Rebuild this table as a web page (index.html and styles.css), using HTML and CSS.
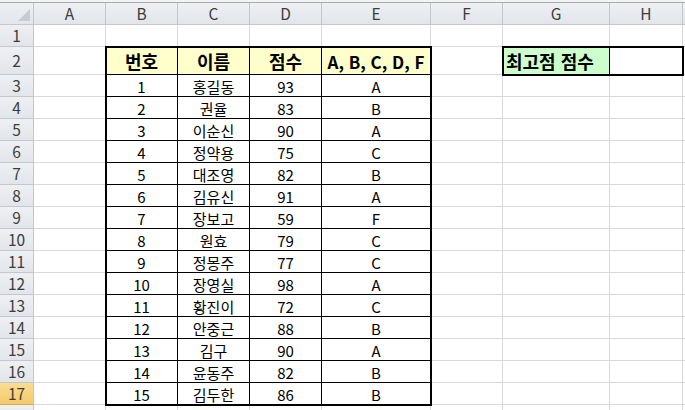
FILE: index.html
```html
<!DOCTYPE html>
<html lang="ko">
<head>
<meta charset="utf-8">
<link rel="stylesheet" href="styles.css">
</head>
<body>
<div class="top"></div>
<div class="stack">
<div class="sheet">
  <div class="h corner"><span class="tri"></span></div>
  <div class="h">A</div><div class="h">B</div><div class="h">C</div><div class="h">D</div><div class="h">E</div><div class="h">F</div><div class="h">G</div><div class="h">H</div><div class="h end"></div>

  <div class="h rh">1</div><div class="c"></div><div class="c"></div><div class="c"></div><div class="c"></div><div class="c"></div><div class="c"></div><div class="c"></div><div class="c"></div><div class="c end"></div>

  <div class="h rh">2</div><div class="c"></div>
  <div class="c t th">번호</div><div class="c t th">이름</div><div class="c t th">점수</div><div class="c t th th-latin">A, B, C, D, F</div>
  <div class="c"></div><div class="c t tg">최고점 점수</div><div class="c"></div><div class="c end"></div>

  <div class="h rh">3</div><div class="c"></div><div class="c t">1</div><div class="c t">홍길동</div><div class="c t">93</div><div class="c t">A</div><div class="c"></div><div class="c"></div><div class="c"></div><div class="c end"></div>
  <div class="h rh">4</div><div class="c"></div><div class="c t">2</div><div class="c t">권율</div><div class="c t">83</div><div class="c t">B</div><div class="c"></div><div class="c"></div><div class="c"></div><div class="c end"></div>
  <div class="h rh">5</div><div class="c"></div><div class="c t">3</div><div class="c t">이순신</div><div class="c t">90</div><div class="c t">A</div><div class="c"></div><div class="c"></div><div class="c"></div><div class="c end"></div>
  <div class="h rh">6</div><div class="c"></div><div class="c t">4</div><div class="c t">정약용</div><div class="c t">75</div><div class="c t">C</div><div class="c"></div><div class="c"></div><div class="c"></div><div class="c end"></div>
  <div class="h rh">7</div><div class="c"></div><div class="c t">5</div><div class="c t">대조영</div><div class="c t">82</div><div class="c t">B</div><div class="c"></div><div class="c"></div><div class="c"></div><div class="c end"></div>
  <div class="h rh">8</div><div class="c"></div><div class="c t">6</div><div class="c t">김유신</div><div class="c t">91</div><div class="c t">A</div><div class="c"></div><div class="c"></div><div class="c"></div><div class="c end"></div>
  <div class="h rh">9</div><div class="c"></div><div class="c t">7</div><div class="c t">장보고</div><div class="c t">59</div><div class="c t">F</div><div class="c"></div><div class="c"></div><div class="c"></div><div class="c end"></div>
  <div class="h rh">10</div><div class="c"></div><div class="c t">8</div><div class="c t">원효</div><div class="c t">79</div><div class="c t">C</div><div class="c"></div><div class="c"></div><div class="c"></div><div class="c end"></div>
  <div class="h rh">11</div><div class="c"></div><div class="c t">9</div><div class="c t">정몽주</div><div class="c t">77</div><div class="c t">C</div><div class="c"></div><div class="c"></div><div class="c"></div><div class="c end"></div>
  <div class="h rh">12</div><div class="c"></div><div class="c t">10</div><div class="c t">장영실</div><div class="c t">98</div><div class="c t">A</div><div class="c"></div><div class="c"></div><div class="c"></div><div class="c end"></div>
  <div class="h rh">13</div><div class="c"></div><div class="c t">11</div><div class="c t">황진이</div><div class="c t">72</div><div class="c t">C</div><div class="c"></div><div class="c"></div><div class="c"></div><div class="c end"></div>
  <div class="h rh">14</div><div class="c"></div><div class="c t">12</div><div class="c t">안중근</div><div class="c t">88</div><div class="c t">B</div><div class="c"></div><div class="c"></div><div class="c"></div><div class="c end"></div>
  <div class="h rh">15</div><div class="c"></div><div class="c t">13</div><div class="c t">김구</div><div class="c t">90</div><div class="c t">A</div><div class="c"></div><div class="c"></div><div class="c"></div><div class="c end"></div>
  <div class="h rh">16</div><div class="c"></div><div class="c t">14</div><div class="c t">윤동주</div><div class="c t">82</div><div class="c t">B</div><div class="c"></div><div class="c"></div><div class="c"></div><div class="c end"></div>
  <div class="h rh sel">17</div><div class="c"></div><div class="c t">15</div><div class="c t">김두한</div><div class="c t">86</div><div class="c t">B</div><div class="c"></div><div class="c"></div><div class="c"></div><div class="c end"></div>
  <div class="h rh"></div><div class="c"></div><div class="c"></div><div class="c"></div><div class="c"></div><div class="c"></div><div class="c"></div><div class="c"></div><div class="c"></div><div class="c end"></div>
</div>
<div class="overlay">
  <div class="box box-table"></div>
  <div class="box box-max"></div>
</div>
</div>
</body>
</html>
```

FILE: styles.css
```css
* {
  box-sizing: border-box;
  margin: 0;
  padding: 0;
}

html, body {
  width: 685px;
  height: 410px;
  overflow: hidden;
  background: #ffffff;
}

body {
  font-family: "Noto Sans CJK KR", "Noto Sans", sans-serif;
  font-size: 15px;
  color: #000000;
}

.top {
  height: 3px;
  background: #f3f3f3;
  border-bottom: 1px solid #a8adb5;
}

.stack {
  display: grid;
}

.stack > .sheet,
.stack > .overlay {
  grid-area: 1 / 1;
}

.sheet,
.overlay {
  display: grid;
  grid-template-columns: 34px 72px 72px 72px 72px 109px 72px 107px 73px 2px;
  grid-template-rows: 22px 22px 28px repeat(15, 22px) 22px;
}

.overlay {
  pointer-events: none;
}

.c {
  border-right: 1px solid #d9d9d9;
  border-bottom: 1px solid #d9d9d9;
  display: flex;
  align-items: center;
  justify-content: center;
  white-space: nowrap;
  overflow: hidden;
  line-height: 1;
  padding-top: 1px;
}

.h {
  background: linear-gradient(#eef0f3, #e2e5ea);
  border-right: 1px solid #c3c7cc;
  border-bottom: 1px solid #c3c7cc;
  color: #3c3c3c;
  display: flex;
  align-items: center;
  justify-content: center;
  font-size: 15.5px;
  line-height: 1;
}

.h.end, .c.end {
  border-right: none;
}

.corner {
  position: relative;
}

.tri {
  position: absolute;
  right: 3px;
  bottom: 3px;
  width: 0;
  height: 0;
  border-left: 12px solid transparent;
  border-bottom: 12px solid #c8ccd2;
}

.sel {
  background: linear-gradient(#f9dd92, #f5c96a);
  border-bottom-color: #d6aa50;
}

.t {
  border-right-color: #000000;
  border-bottom-color: #000000;
}

.th {
  background: #ffffcc;
  font-weight: bold;
  font-size: 18px;
}

.th-latin {
  font-size: 17px;
}

.tg {
  background: #ccffcc;
  font-weight: bold;
  font-size: 18px;
  justify-content: flex-start;
  padding-left: 3px;
}

.box {
  border: 2px solid #000000;
  margin: -1px;
}

.box-table {
  grid-column: 3 / 7;
  grid-row: 3 / 19;
}

.box-max {
  grid-column: 8 / 10;
  grid-row: 3 / 4;
}
```
